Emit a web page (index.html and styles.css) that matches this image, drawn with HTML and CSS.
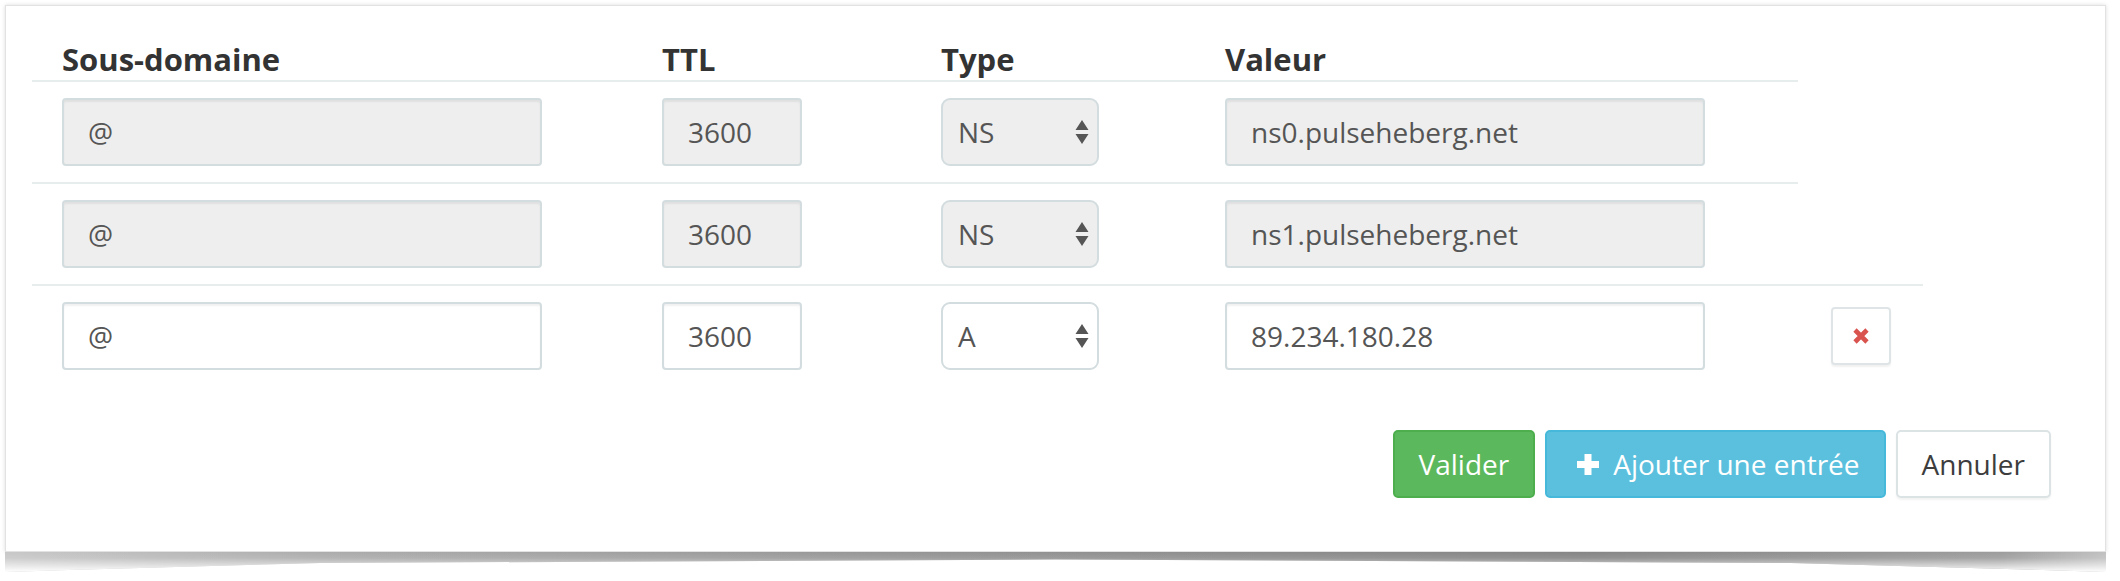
FILE: index.html
```html
<!DOCTYPE html>
<html lang="fr">
<head>
<meta charset="utf-8">
<title>Zone DNS</title>
<link rel="stylesheet" href="styles.css">
</head>
<body>
<div class="sheet">
<div class="panel">
  <div class="table">
    <div class="row head">
      <div class="cell th">Sous-domaine</div>
      <div class="cell th">TTL</div>
      <div class="cell th">Type</div>
      <div class="cell th">Valeur</div>
    </div>
    <div class="row first">
      <div class="cell"><div class="field wide disabled">@</div></div>
      <div class="cell"><div class="field ttl disabled">3600</div></div>
      <div class="cell"><div class="select disabled"><span>NS</span><svg class="arrows" width="14" height="24" viewBox="0 0 14 24"><path d="M7 0 L13.5 10 L0.5 10 Z M0.5 14 L13.5 14 L7 24 Z" fill="#555"/></svg></div></div>
      <div class="cell"><div class="field wide disabled">ns0.pulseheberg.net</div></div>
    </div>
    <div class="row">
      <div class="cell"><div class="field wide disabled">@</div></div>
      <div class="cell"><div class="field ttl disabled">3600</div></div>
      <div class="cell"><div class="select disabled"><span>NS</span><svg class="arrows" width="14" height="24" viewBox="0 0 14 24"><path d="M7 0 L13.5 10 L0.5 10 Z M0.5 14 L13.5 14 L7 24 Z" fill="#555"/></svg></div></div>
      <div class="cell"><div class="field wide disabled">ns1.pulseheberg.net</div></div>
    </div>
    <div class="row">
      <div class="cell"><div class="field wide">@</div></div>
      <div class="cell"><div class="field ttl">3600</div></div>
      <div class="cell"><div class="select"><span>A</span><svg class="arrows" width="14" height="24" viewBox="0 0 14 24"><path d="M7 0 L13.5 10 L0.5 10 Z M0.5 14 L13.5 14 L7 24 Z" fill="#555"/></svg></div></div>
      <div class="cell"><div class="field wide">89.234.180.28</div></div>
      <div class="cell action"><div class="btn-del"><svg width="16" height="16" viewBox="0 0 16 16"><path d="M2 2 L14 14 M14 2 L2 14" stroke="#d9534f" stroke-width="4.6" stroke-linecap="butt"/></svg></div></div>
    </div>
  </div>
  <div class="footer">
    <div class="btn btn-success">Valider</div>
    <div class="btn btn-info"><svg class="plus" width="22" height="21" viewBox="0 0 22 21"><rect x="7.5" y="0" width="7" height="21" fill="#fff"/><rect x="0" y="7" width="22" height="7" fill="#fff"/></svg>Ajouter une entrée</div>
    <div class="btn btn-default">Annuler</div>
  </div>
</div>
<div class="curl"></div>
</div>
</body>
</html>
```
FILE: styles.css
```css
html, body {
  margin: 0;
  padding: 0;
  background: #fff;
}
body {
  font-family: "Open Sans", "Liberation Sans", sans-serif;
  color: #333;
}
.sheet {
  margin: 5px 0 0 5px;
  width: 2101px;
}
.panel {
  position: relative;
  width: 2101px;
  box-sizing: border-box;
  background: #fff;
  border: 1px solid #e2e2e2;
  box-shadow: 0 0 4px rgba(0, 0, 0, 0.14);
  padding: 0 0 53px 26px;
}
.curl {
  height: 20px;
  background:
    linear-gradient(to bottom, rgba(255, 255, 255, 0) 0, rgba(255, 255, 255, 0.1) 30%, rgba(255, 255, 255, 0.6) 70%, #fff 100%),
    linear-gradient(to right, #c8c8c8 0, #acacac 15%, #939393 45%, #858585 75%, #9c9c9c 95%, #c0c0c0 100%);
  clip-path: polygon(0 0, 100% 0, 100% 100%, 97% 90%, 85% 55%, 50% 38%, 15% 55%, 3% 90%, 0 100%);
}
.table {
  display: flex;
  flex-direction: column;
}
.row {
  display: grid;
  grid-template-columns: 600px 279px 284px 603px 125px;
}
.cell {
  padding: 16px 0 16px 30px;
  border-top: 2px solid #e7eded;
  display: flex;
  align-items: center;
}
.row.first .cell {
  border-top: 0;
}
.th {
  border-top: 0;
  border-bottom: 2px solid #e7eded;
  padding: 33px 0 1px 30px;
  font-size: 31px;
  line-height: 40px;
  font-weight: 700;
  color: #333;
}
.cell.action {
  padding: 16px 0;
  justify-content: center;
}
.field, .select {
  box-sizing: border-box;
  height: 68px;
  border: 2px solid #d3dcdf;
  border-radius: 4px;
  background: #fff;
  box-shadow: inset 0 2px 2px rgba(0, 0, 0, 0.06);
  padding: 12px 24px;
  font-size: 28px;
  line-height: 40px;
  color: #555;
  white-space: nowrap;
}
.field.wide {
  width: 480px;
}
.field.ttl {
  width: 140px;
}
.disabled {
  background: #eeeeee;
}
.select {
  width: 158px;
  border-radius: 9px;
  padding: 12px 8px 12px 15px;
  display: flex;
  align-items: center;
  justify-content: space-between;
  box-shadow: none;
}
.arrows {
  display: block;
}
.btn-del {
  box-sizing: border-box;
  width: 60px;
  height: 58px;
  border: 2px solid #dfe5e7;
  border-radius: 4px;
  background: #fff;
  box-shadow: 0 2px 2px rgba(0, 0, 0, 0.06);
  display: flex;
  align-items: center;
  justify-content: center;
}
.footer {
  display: flex;
  justify-content: flex-end;
  gap: 10px;
  margin-top: 44px;
  padding-right: 54px;
}
.btn {
  box-sizing: border-box;
  height: 68px;
  padding: 12px 24px;
  border: 2px solid transparent;
  border-radius: 5px;
  font-size: 28px;
  line-height: 40px;
  white-space: nowrap;
  display: flex;
  align-items: center;
}
.btn-success {
  background: #5cb85c;
  border-color: #4cae4c;
  color: #fff;
}
.btn-info {
  background: #5bc0de;
  border-color: #46b8da;
  color: #fff;
}
.btn-default {
  background: #fff;
  border-color: #dbe3e5;
  color: #3d3d3d;
  box-shadow: 0 2px 2px rgba(0, 0, 0, 0.05);
}
.plus {
  display: block;
  margin: 0 14px 0 6px;
}
```
